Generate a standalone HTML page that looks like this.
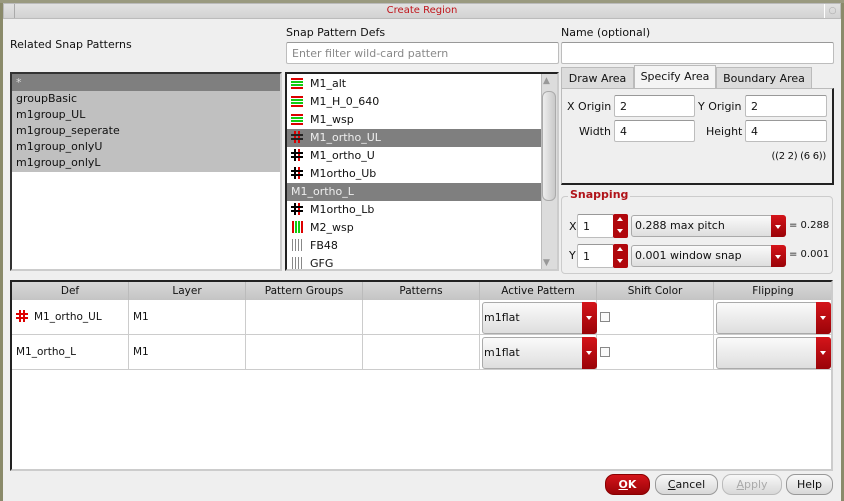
<!DOCTYPE html><html><head><style>
*{box-sizing:border-box;margin:0;padding:0}
body{width:844px;height:501px;background:#efefef;font-family:"DejaVu Sans","Liberation Sans",sans-serif;font-size:11px;color:#111;position:relative;overflow:hidden}
.a{position:absolute;white-space:nowrap}
.inp{position:absolute;background:#fff;border:1px solid #bdbdbd;border-top-color:#999;border-radius:2px;padding:4px 5px;font-size:11px;line-height:13px}
.row{position:absolute;left:0;right:0;height:18px;line-height:18px;padding-left:4px;white-space:nowrap}
.ic{display:inline-block;width:12px;height:12px;vertical-align:-2px;margin-right:7px}
.spin{position:absolute;width:15px;background:#b0070c;border-radius:2px}
.combo{position:absolute;background:linear-gradient(#fafafa,#dedede);border:1px solid #aaa;border-radius:3px;padding-left:3px;font-size:11px}
.dd{position:absolute;right:-1px;top:-1px;bottom:-1px;width:15px;background:linear-gradient(#d4141a,#9a0308);border-radius:0 3px 3px 0}
.dd:after{content:"";position:absolute;left:4px;top:45%;border:3px solid transparent;border-top:4px solid #fff}
.th{position:absolute;top:0;height:18px;line-height:18px;text-align:center;border-right:1px solid #bbb;background:linear-gradient(#d8d8d8,#c4c4c4);font-size:10.5px}
.cell{position:absolute;border-right:1px solid #ccc;border-bottom:1px solid #ccc;height:35px;line-height:35px;padding-left:4px;font-size:10.5px}
.btn{position:absolute;top:474px;height:21px;border:1px solid #999;border-radius:9px;background:linear-gradient(#f8f8f8,#d8d8d8);text-align:center;line-height:19px;font-size:11px}
</style></head><body>
<div class="a" style="left:0;top:0;width:3px;height:501px;background:#8a8a6a"></div>
<div class="a" style="left:841px;top:0;width:3px;height:501px;background:#8a8a6a"></div>
<div class="a" style="left:0;top:0;width:844px;height:3px;background:#9a9a80"></div>
<div class="a" style="left:3px;top:3px;width:838px;height:16px;background:linear-gradient(#e2e2e2,#d2d2d2);border:1px solid #bbb"></div>
<div class="a" style="left:4px;top:4px;width:11px;height:14px;border-right:1px solid #aaa"></div>
<div class="a" style="left:824px;top:4px;width:16px;height:14px;border-left:1px solid #fff;color:#aaa;font-size:9px;text-align:center;line-height:14px">○</div>
<div class="a" style="left:0;top:4px;width:844px;text-align:center;color:#c0141a;font-size:10px;line-height:14px">Create Region</div>

<div class="a" style="left:10px;top:38px">Related Snap Patterns</div>
<div class="a" style="left:286px;top:26px">Snap Pattern Defs</div>
<div class="a" style="left:561px;top:26px">Name (optional)</div>
<div class="inp" style="left:286px;top:42px;width:273px;height:22px;color:#888">Enter filter wild-card pattern</div>
<div class="inp" style="left:561px;top:42px;width:273px;height:22px"></div>

<div class="a" style="left:10px;top:72px;width:272px;height:199px;background:#fff;border:2px solid #333;border-right-color:#ccc;border-bottom-color:#ccc">
<div class="row" style="top:0;height:17px;line-height:17px;background:#7f7f7f;color:#ddd">*</div>
<div class="a" style="top:17px;left:0;right:0;height:81px;background:#c0c0c0"></div>
<div class="row" style="top:17px;height:16px;line-height:16px">groupBasic</div>
<div class="row" style="top:33px;height:16px;line-height:16px">m1group_UL</div>
<div class="row" style="top:49px;height:16px;line-height:16px">m1group_seperate</div>
<div class="row" style="top:65px;height:16px;line-height:16px">m1group_onlyU</div>
<div class="row" style="top:81px;height:16px;line-height:16px">m1group_onlyL</div>
</div>

<div class="a" style="left:285px;top:72px;width:274px;height:199px;background:#fff;border:2px solid #222;border-right-color:#ccc;border-bottom-color:#ccc;overflow:hidden">
<div class="row" style="top:1px"><svg class="ic" viewBox="0 0 12 12"><rect y="1" width="12" height="2" fill="#d00"/><rect y="4" width="12" height="2" fill="#1c1"/><rect y="7" width="12" height="2" fill="#1c1"/><rect y="10" width="12" height="2" fill="#d00"/></svg>M1_alt</div>
<div class="row" style="top:19px"><svg class="ic" viewBox="0 0 12 12"><rect y="1" width="12" height="2" fill="#d00"/><rect y="4" width="12" height="2" fill="#1c1"/><rect y="7" width="12" height="2" fill="#1c1"/><rect y="10" width="12" height="2" fill="#d00"/></svg>M1_H_0_640</div>
<div class="row" style="top:37px"><svg class="ic" viewBox="0 0 12 12"><rect y="1" width="12" height="2" fill="#d00"/><rect y="4" width="12" height="2" fill="#1c1"/><rect y="7" width="12" height="2" fill="#1c1"/><rect y="10" width="12" height="2" fill="#d00"/></svg>M1_wsp</div>
<div class="row" style="top:55px;background:#7f7f7f;color:#eee"><svg class="ic" viewBox="0 0 12 12"><rect x="3" width="2" height="12" fill="#d00"/><rect x="7" width="2" height="12" fill="#d00"/><rect y="3" width="12" height="2" fill="#222"/><rect y="7" width="12" height="2" fill="#222"/></svg>M1_ortho_UL</div>
<div class="row" style="top:73px"><svg class="ic" viewBox="0 0 12 12"><rect x="3" width="2" height="12" fill="#000"/><rect x="7" width="2" height="12" fill="#d00"/><rect y="3" width="12" height="2" fill="#000"/><rect y="7" width="12" height="2" fill="#000"/></svg>M1_ortho_U</div>
<div class="row" style="top:91px"><svg class="ic" viewBox="0 0 12 12"><rect x="3" width="2" height="12" fill="#000"/><rect x="7" width="2" height="12" fill="#d00"/><rect y="3" width="12" height="2" fill="#000"/><rect y="7" width="12" height="2" fill="#000"/></svg>M1ortho_Ub</div>
<div class="row" style="top:109px;background:#7f7f7f;color:#eee">M1_ortho_L</div>
<div class="row" style="top:127px"><svg class="ic" viewBox="0 0 12 12"><rect x="3" width="2" height="12" fill="#000"/><rect x="7" width="2" height="12" fill="#d00"/><rect y="3" width="12" height="2" fill="#000"/><rect y="7" width="12" height="2" fill="#000"/></svg>M1ortho_Lb</div>
<div class="row" style="top:145px"><svg class="ic" viewBox="0 0 12 12"><rect x="1" width="2" height="12" fill="#d00"/><rect x="4" width="2" height="12" fill="#1c1"/><rect x="7" width="2" height="12" fill="#1c1"/><rect x="10" width="2" height="12" fill="#d00"/></svg>M2_wsp</div>
<div class="row" style="top:163px"><svg class="ic" viewBox="0 0 12 12"><rect x="1" width="1" height="12" fill="#888"/><rect x="4" width="1" height="12" fill="#888"/><rect x="7" width="1" height="12" fill="#888"/><rect x="10" width="1" height="12" fill="#888"/></svg>FB48</div>
<div class="row" style="top:181px"><svg class="ic" viewBox="0 0 12 12"><rect x="1" width="1" height="12" fill="#888"/><rect x="4" width="1" height="12" fill="#888"/><rect x="7" width="1" height="12" fill="#888"/><rect x="10" width="1" height="12" fill="#888"/></svg>GFG</div>
<div class="a" style="left:254px;top:0;width:16px;height:197px;background:#dcdcdc;border-left:1px solid #bbb"></div>
<div class="a" style="left:256px;top:2px;color:#999;font-size:9px">▲</div>
<div class="a" style="left:256px;top:184px;color:#999;font-size:9px">▼</div>
<div class="a" style="left:255px;top:17px;width:14px;height:110px;background:linear-gradient(90deg,#eee,#c8c8c8);border:1px solid #aaa;border-radius:6px"></div>
</div>

<div class="a" style="left:561px;top:67px;width:73px;height:22px;background:#dcdcdc;border:1px solid #bbb;text-align:center;line-height:21px">Draw Area</div>
<div class="a" style="left:634px;top:65px;width:82px;height:24px;background:#f4f4f4;border:1px solid #bbb;border-bottom:none;text-align:center;line-height:22px">Specify Area</div>
<div class="a" style="left:716px;top:67px;width:96px;height:22px;background:#dcdcdc;border:1px solid #bbb;text-align:center;line-height:21px">Boundary Area</div>
<div class="a" style="left:561px;top:88px;width:273px;height:97px;border:1px solid #bbb;border-right:2px solid #222;border-bottom:2px solid #222;background:#efefef"></div>
<div class="a" style="left:567px;top:100px">X Origin</div>
<div class="inp" style="left:614px;top:95px;width:81px;height:22px">2</div>
<div class="a" style="left:698px;top:100px">Y Origin</div>
<div class="inp" style="left:745px;top:95px;width:82px;height:22px">2</div>
<div class="a" style="left:579px;top:125px">Width</div>
<div class="inp" style="left:614px;top:120px;width:81px;height:22px">4</div>
<div class="a" style="left:706px;top:125px">Height</div>
<div class="inp" style="left:745px;top:120px;width:82px;height:22px">4</div>
<div class="a" style="left:746px;top:151px;width:80px;text-align:right;font-size:10px;letter-spacing:-0.3px">((2 2) (6 6))</div>

<div class="a" style="left:561px;top:196px;width:272px;height:78px;border:1px solid #ccc;border-radius:4px"></div>
<div class="a" style="left:568px;top:188px;background:#efefef;padding:0 2px;color:#b0141a;font-weight:bold;font-size:11px">Snapping</div>
<div class="a" style="left:569px;top:220px">X</div>
<div class="inp" style="left:577px;top:214px;width:37px;height:24px;padding-top:5px">1</div>
<div class="spin" style="left:613px;top:214px;height:24px"><div class="a" style="left:4px;top:3px;border:3px solid transparent;border-bottom:4px solid #fff;border-top:none"></div><div class="a" style="left:4px;top:15px;border:3px solid transparent;border-top:4px solid #fff;border-bottom:none"></div></div>
<div class="combo" style="left:631px;top:215px;width:155px;height:22px;line-height:20px">0.288 max pitch<div class="dd"></div></div>
<div class="a" style="left:789px;top:220px;font-size:10px">= 0.288</div>
<div class="a" style="left:569px;top:249px">Y</div>
<div class="inp" style="left:577px;top:244px;width:37px;height:24px;padding-top:5px">1</div>
<div class="spin" style="left:613px;top:244px;height:24px"><div class="a" style="left:4px;top:3px;border:3px solid transparent;border-bottom:4px solid #fff;border-top:none"></div><div class="a" style="left:4px;top:15px;border:3px solid transparent;border-top:4px solid #fff;border-bottom:none"></div></div>
<div class="combo" style="left:631px;top:245px;width:155px;height:22px;line-height:20px">0.001 window snap<div class="dd"></div></div>
<div class="a" style="left:789px;top:249px;font-size:10px">= 0.001</div>

<div class="a" style="left:10px;top:280px;width:823px;height:191px;background:#fff;border:2px solid #222;border-right-color:#ccc;border-bottom-color:#ccc;overflow:hidden">
<div class="a" style="left:0;top:0;width:821px;height:18px;background:#ccc"></div>
<div class="th" style="left:0;width:117px">Def</div>
<div class="th" style="left:117px;width:117px">Layer</div>
<div class="th" style="left:234px;width:117px">Pattern Groups</div>
<div class="th" style="left:351px;width:117px">Patterns</div>
<div class="th" style="left:468px;width:117px">Active Pattern</div>
<div class="th" style="left:585px;width:117px">Shift Color</div>
<div class="th" style="left:702px;width:119px">Flipping</div>
<div class="cell" style="left:0;top:18px;width:117px"><svg class="ic" style="margin-right:6px" viewBox="0 0 12 12"><rect x="3" width="2" height="12" fill="#d00"/><rect x="7" width="2" height="12" fill="#d00"/><rect y="3" width="12" height="2" fill="#d00"/><rect y="7" width="12" height="2" fill="#d00"/></svg>M1_ortho_UL</div>
<div class="cell" style="left:117px;top:18px;width:117px">M1</div>
<div class="cell" style="left:234px;top:18px;width:117px"></div>
<div class="cell" style="left:351px;top:18px;width:117px"></div>
<div class="cell" style="left:468px;top:18px;width:117px"></div>
<div class="cell" style="left:585px;top:18px;width:117px"></div>
<div class="cell" style="left:702px;top:18px;width:119px"></div>
<div class="cell" style="left:0;top:53px;width:117px">M1_ortho_L</div>
<div class="cell" style="left:117px;top:53px;width:117px">M1</div>
<div class="cell" style="left:234px;top:53px;width:117px"></div>
<div class="cell" style="left:351px;top:53px;width:117px"></div>
<div class="cell" style="left:468px;top:53px;width:117px"></div>
<div class="cell" style="left:585px;top:53px;width:117px"></div>
<div class="cell" style="left:702px;top:53px;width:119px"></div>
<div class="combo" style="left:470px;top:20px;width:115px;height:32px;line-height:30px;padding-left:1px">m1flat<div class="dd"></div></div>
<div class="combo" style="left:470px;top:55px;width:115px;height:32px;line-height:30px;padding-left:1px">m1flat<div class="dd"></div></div>
<div class="a" style="left:588px;top:30px;width:10px;height:10px;border:1px solid #888;background:#fafafa"></div>
<div class="a" style="left:588px;top:65px;width:10px;height:10px;border:1px solid #888;background:#fafafa"></div>
<div class="combo" style="left:704px;top:20px;width:115px;height:32px"><div class="dd"></div></div>
<div class="combo" style="left:704px;top:55px;width:115px;height:32px"><div class="dd"></div></div>
</div>

<div class="btn" style="left:605px;width:45px;background:linear-gradient(#d4141a,#9a0308);border-color:#800;color:#fff;font-weight:bold"><u>O</u>K</div>
<div class="btn" style="left:655px;width:63px"><u>C</u>ancel</div>
<div class="btn" style="left:722px;width:60px;color:#aaa;border-color:#bbb"><u>A</u>pply</div>
<div class="btn" style="left:786px;width:47px">Help</div>
</body></html>
